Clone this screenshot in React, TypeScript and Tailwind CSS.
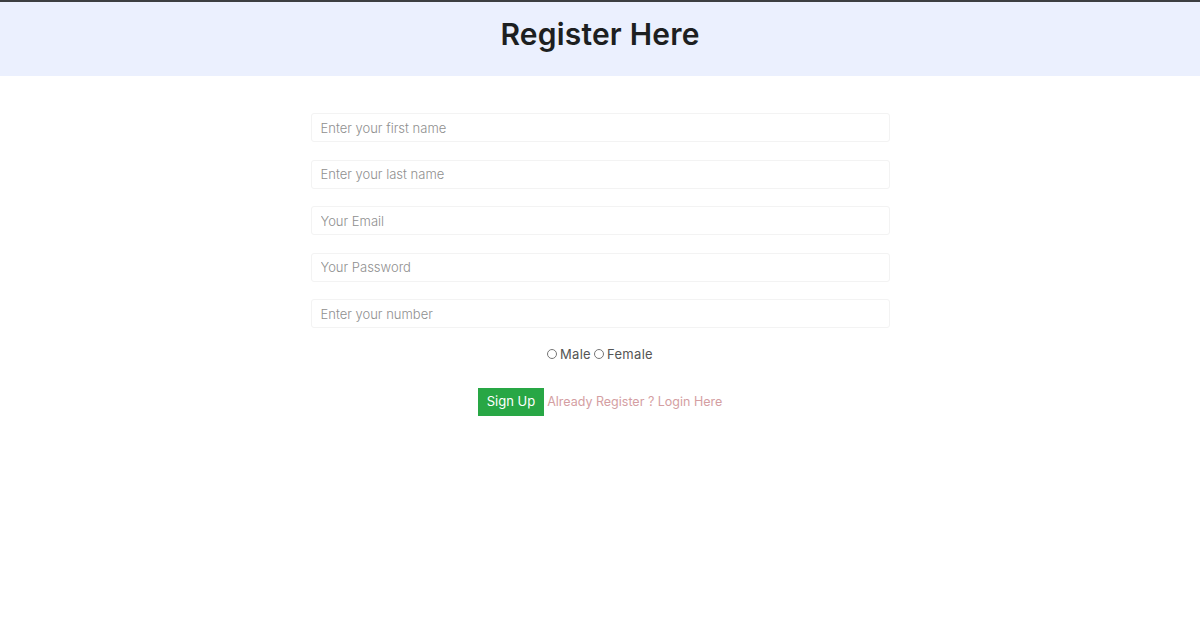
import React from 'react';

const fields = [
  { type: 'text', placeholder: 'Enter your first name' },
  { type: 'text', placeholder: 'Enter your last name' },
  { type: 'email', placeholder: 'Your Email' },
  { type: 'password', placeholder: 'Your Password' },
  { type: 'text', placeholder: 'Enter your number' },
];

export default function App() {
  return (
    <div className="min-h-[621px] bg-white font-['Inter',sans-serif] text-[#212529]">
      <div className="h-[2px] bg-[#3c3f41]" />
      <header className="flex h-[74px] justify-center bg-[#ebf0fe] pt-[12px]">
        <h1 className="text-[30px] leading-[40px] font-semibold tracking-[0.2px] text-[#1d1f21]">Register Here</h1>
      </header>

      <form className="mx-auto mt-[37px] flex w-[579px] flex-col">
        {fields.map((f) => (
          <input
            key={f.placeholder}
            type={f.type}
            placeholder={f.placeholder}
            className="mb-[17.5px] h-[29px] w-full rounded-[3px] border border-[#f3f3f3] px-[9px] text-[13px] font-light text-[#555] outline-none placeholder:text-[#8f8f8f]"
          />
        ))}

        <div className="-mt-[1px] flex items-center justify-center gap-[3px] text-[13px] tracking-[0.3px] text-[#555]">
          <label className="flex items-center gap-[3px]">
            <input type="radio" name="gender" className="m-0 h-[10px] w-[10px]" />
            Male
          </label>
          <label className="flex items-center gap-[3px]">
            <input type="radio" name="gender" className="m-0 h-[10px] w-[10px]" />
            Female
          </label>
        </div>

        <div className="mt-[24px] flex items-center justify-center gap-[3px]">
          <button type="button" className="h-[28px] bg-[#28a745] px-[9px] text-[13px] text-white">
            Sign Up
          </button>
          <a href="#" className="text-[12.5px] text-[#d49ea2]">
            Already Register ? Login Here
          </a>
        </div>
      </form>
    </div>
  );
}
